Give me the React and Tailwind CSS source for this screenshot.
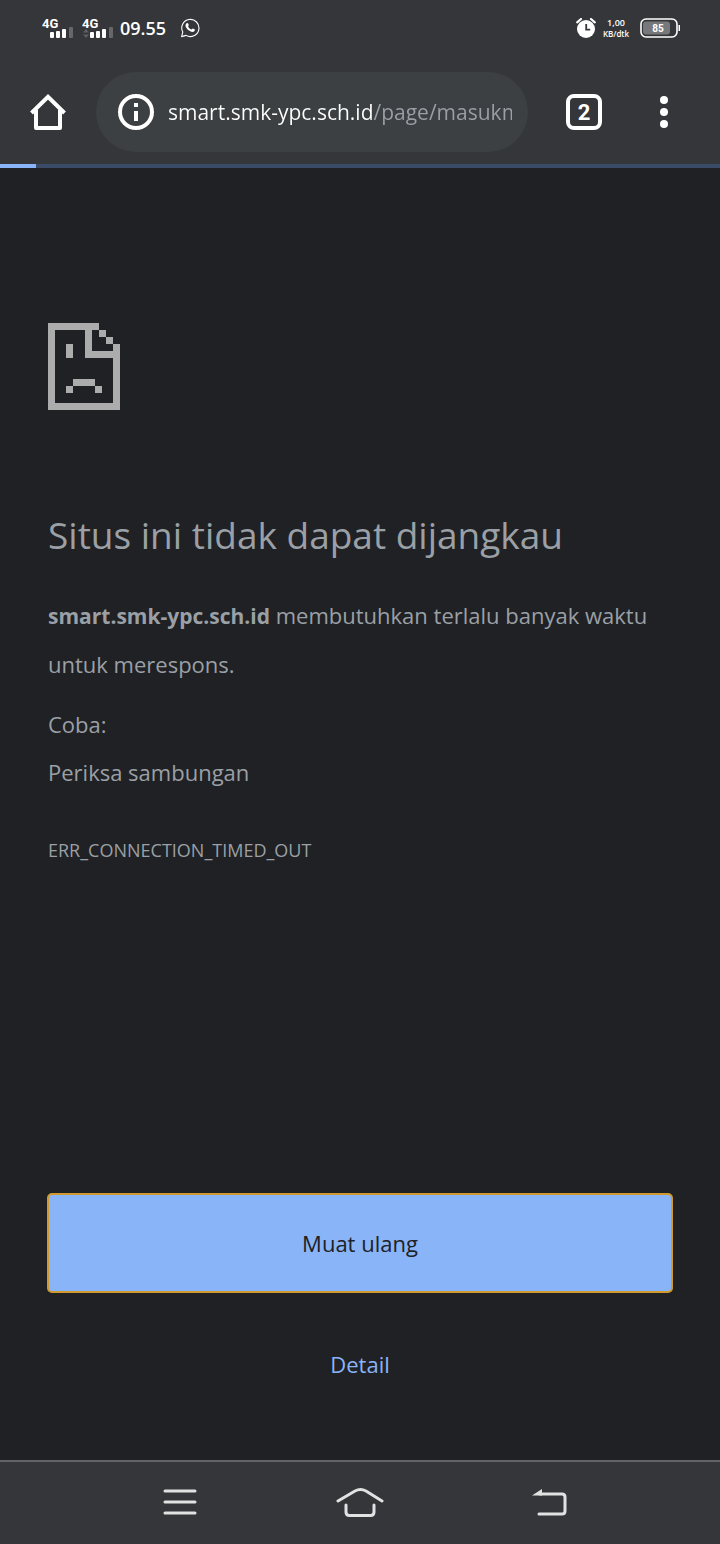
function SignalIcon({ arrows }) {
  return (
    <svg viewBox="0 0 36 24" className="h-6 w-9 shrink-0 fill-white" role="img" aria-label="4G">
      <text x="0" y="12" fontSize="13" fontWeight="700" fontFamily="Roboto, sans-serif">4G</text>
      {arrows && <path d="M1 16.500l3-3.500 3 3.500zM1 18.500l3 3.500 3-3.500z" fill="#5f6064" />}
      <rect x="8" y="16" width="4" height="6" rx="1" />
      <rect x="14" y="15" width="4" height="7" rx="1" />
      <rect x="20" y="13" width="4" height="9" rx="1" />
      <rect x="27" y="11" width="4" height="11" rx="1" fill="#66676a" />
    </svg>
  );
}

function StatusBar() {
  return (
    <div className="flex h-14 items-center justify-between pr-10 pl-[42px] text-white">
      <div className="flex items-center">
        <SignalIcon />
        <div className="ml-1">
          <SignalIcon arrows />
        </div>
        <time className="ml-[2px] text-lg font-semibold">09.55</time>
        <svg viewBox="0 0 20 20" className="ml-[14px] size-5" fill="none" stroke="#fff" strokeWidth="1.1" role="img" aria-label="WhatsApp">
          <path d="M1.6 18.6l1.2-4.5A8.6 8.6 0 1 1 6 17.4z" strokeLinejoin="round" />
          <path d="M6.6 5.2c.6-.5 1.2-.4 1.5.2l.7 1.6c.1.5-.7 1-.7 1.4.5 1.3 1.8 2.5 3.2 3 .5.1 1-1 1.5-.9l1.7.8c.6.4.4 1.2 0 1.7-1.4 1.6-3.5 1-5.5-.4-2-1.500-3.600-3.500-3.500-5.400.1-.9.600-1.600 1.100-2z" fill="#fff" stroke="none" />
        </svg>
      </div>
      <div className="flex items-center">
        <svg viewBox="0 0 20 20" className="size-5" role="img" aria-label="Alarm">
          <circle cx="10" cy="11" r="9" fill="#fff" />
          <path d="M1.200 4.300L5 1M18.800 4.300L15 1" stroke="#fff" strokeWidth="2.200" strokeLinecap="round" />
          <path d="M10.200 6v5.700h4" fill="none" stroke="#35363a" strokeWidth="1.800" />
        </svg>
        <div className="ml-[6px] w-7 text-center font-semibold">
          <div className="text-[9px] leading-[11px]">1,00</div>
          <div className="text-[8px] leading-[11px]">KB/dtk</div>
        </div>
        <svg viewBox="0 0 40 20" className="ml-[10px] h-5 w-10" role="img" aria-label="85%">
          <rect x="1" y="1" width="36" height="18" rx="5" fill="none" stroke="#fff" strokeWidth="1.600" />
          <rect x="3" y="3.500" width="27" height="13" rx="3" fill="#77787b" />
          <rect x="38.500" y="7" width="1.500" height="6" fill="#fff" />
          <text x="18" y="13.500" textAnchor="middle" fontSize="10" fontWeight="700" fill="#fff" fontFamily="Roboto, sans-serif">85</text>
        </svg>
      </div>
    </div>
  );
}

function Toolbar() {
  return (
    <div className="flex h-[108px] items-center pt-1 text-white">
      <button type="button" aria-label="Beranda" className="flex w-24 shrink-0 justify-center">
        <svg viewBox="0 0 36 36" className="size-9" fill="none" stroke="#fff" strokeWidth="4" strokeLinejoin="round">
          <path d="M1.500 19L18 2.800 34.500 19" strokeLinejoin="miter" />
          <path d="M6 16v18h24V16" />
        </svg>
      </button>
      <div className="flex h-20 min-w-0 flex-1 items-center rounded-full bg-[#3c4043] pr-4 pl-[22px]">
        <button type="button" aria-label="Info situs" className="shrink-0">
          <svg viewBox="0 0 36 36" className="size-9">
            <circle cx="18" cy="18" r="16" fill="none" stroke="#fff" strokeWidth="4" />
            <path d="M16 9h4v4h-4zM16 17h4v10h-4z" fill="#fff" />
          </svg>
        </button>
        <input
          type="text"
          aria-label="Alamat"
          defaultValue="smart.smk-ypc.sch.id/page/masukm"
          className="ml-[14px] min-w-0 flex-1 bg-[linear-gradient(to_right,#ffffff_205px,#9aa0a6_205px)] bg-clip-text text-[21px] leading-8 text-transparent outline-none"
        />
      </div>
      <button type="button" aria-label="Tab" className="flex w-28 shrink-0 justify-center">
        <span className="flex size-9 items-center justify-center rounded-lg border-4 border-white font-[Roboto,sans-serif] text-[22px] font-bold">2</span>
      </button>
      <button type="button" aria-label="Menu" className="mr-8 flex w-12 shrink-0 justify-center">
        <svg viewBox="0 0 8 32" className="h-8 w-2" fill="#fff">
          <circle cx="4" cy="4" r="4" />
          <circle cx="4" cy="16" r="4" />
          <circle cx="4" cy="28" r="4" />
        </svg>
      </button>
    </div>
  );
}

function SadPage() {
  return (
    <svg viewBox="0 0 72 87" className="h-[87px] w-[72px]" fill="#acacac" shapeRendering="crispEdges" aria-hidden="true">
      <path d="M0 0h51v7h7v7h7v7h7v66H0zM7 7v73h58V35H37V7zM44 7v21h21v-7h-7v-7h-7V7z" fillRule="evenodd" />
      <path d="M18 21h7v14h-7zM25 56h22v7H25zM18 63h7v7h-7zM47 63h7v7h-7z" />
    </svg>
  );
}

function NavBar() {
  return (
    <nav className="flex h-[84px] items-center justify-between border-t-2 border-[#626267] bg-[#35363a] px-[152px] pb-[2px]">
      <button type="button" aria-label="Aplikasi terbaru" className="flex w-14 justify-center">
        <svg viewBox="0 0 34 26" className="h-[26px] w-[34px]" stroke="#e2e2e2" strokeWidth="3" strokeLinecap="round">
          <path d="M2 2h30M2 13h30M2 24h30" />
        </svg>
      </button>
      <button type="button" aria-label="Layar utama" className="flex w-14 justify-center">
        <svg viewBox="0 0 48 30" className="h-[30px] w-12" fill="none" stroke="#e2e2e2" strokeWidth="3" strokeLinecap="round">
          <path d="M2 14L19 4Q24.500 1 30 4L46 14" />
          <path d="M10 18v7q0 3.500 3.500 3.500h21q3.500 0 3.500-3.500v-7" />
        </svg>
      </button>
      <button type="button" aria-label="Kembali" className="flex w-14 justify-end">
        <svg viewBox="0 0 36 28" className="h-7 w-9" fill="none" stroke="#e2e2e2" strokeWidth="3" strokeLinecap="round">
          <path d="M8 6h22q3 0 3 3v14q0 3-3 3H7" />
          <path d="M0 7.500L10 1v6.500z" fill="#e2e2e2" stroke="none" />
        </svg>
      </button>
    </nav>
  );
}

export default function App() {
  return (
    <div className="flex min-h-screen flex-col bg-[#202124] font-['Open_Sans',sans-serif]">
      <header className="bg-[#35363a]">
        <StatusBar />
        <Toolbar />
        <div role="progressbar" aria-label="Memuat" aria-valuenow={5} className="h-1 bg-[#3a4b68]">
          <div className="h-full w-1/20 bg-[#8ab4f8]" />
        </div>
      </header>
      <main className="flex flex-1 flex-col px-12 pt-[155px] text-[#9aa0a6]">
        <SadPage />
        <h1 className="mt-[101px] text-[37px] leading-12">Situs ini tidak dapat dijangkau</h1>
        <p className="mt-8 text-[22px] leading-12">
          <strong className="text-[21px]">smart.smk-ypc.sch.id</strong> membutuhkan terlalu banyak waktu untuk merespons.
        </p>
        <p className="mt-3 text-[22px] leading-12">Coba:</p>
        <ul className="text-[22px] leading-12">
          <li>Periksa sambungan</li>
        </ul>
        <p className="mt-[42px] text-lg leading-6">ERR_CONNECTION_TIMED_OUT</p>
        <div className="mt-auto flex flex-col pt-12 pb-[72px]">
          <button type="button" className="h-[98px] rounded-sm bg-[#8ab4f8] text-[22px] text-[#202124] outline-2 -outline-offset-1 outline-[#d19a2e]">
            Muat ulang
          </button>
          <button type="button" className="mt-12 h-12 self-center text-[22px] text-[#8ab4f8]">
            Detail
          </button>
        </div>
      </main>
      <NavBar />
    </div>
  );
}
